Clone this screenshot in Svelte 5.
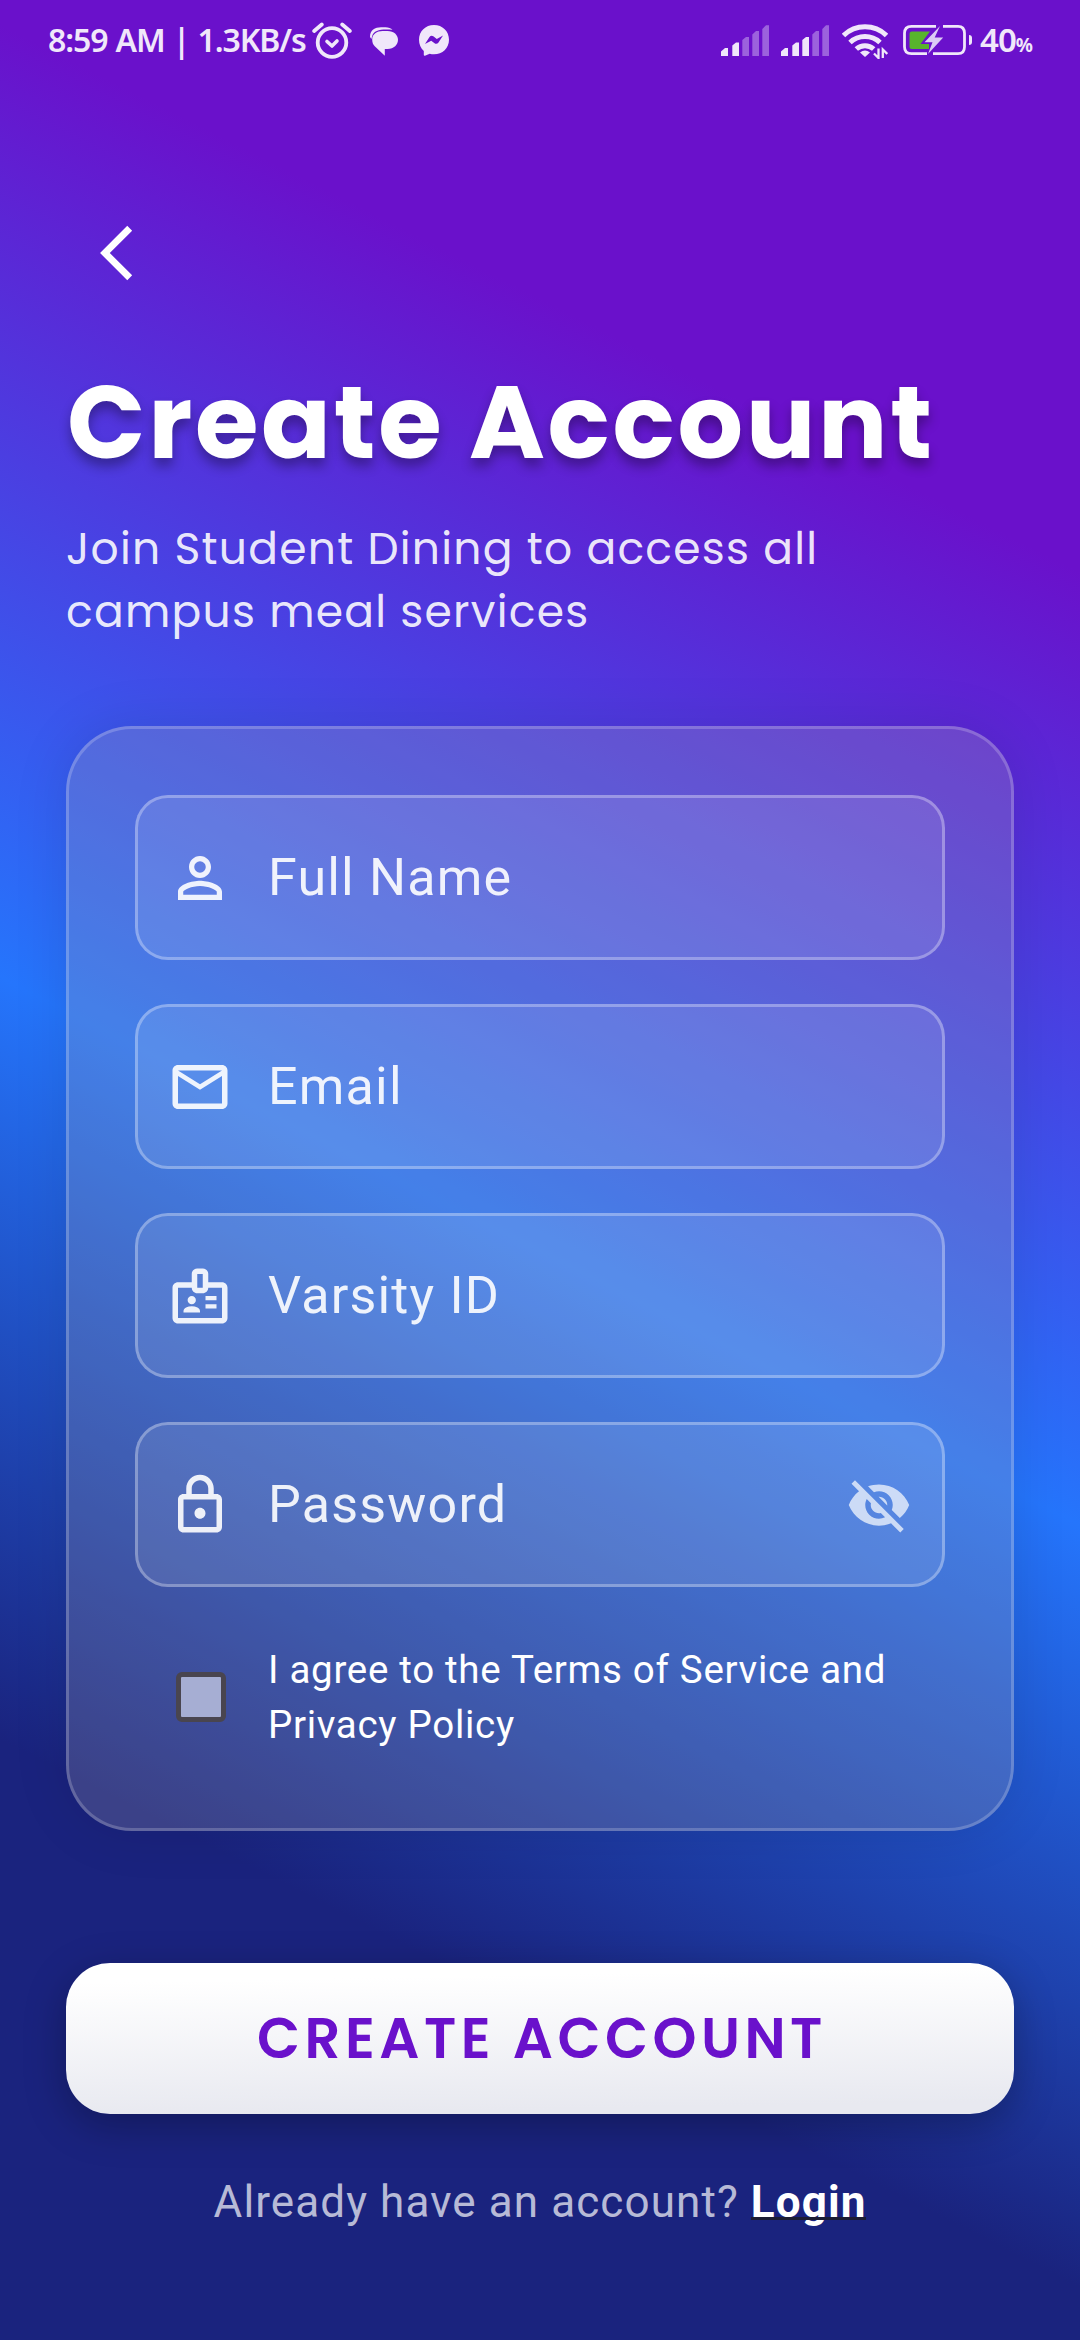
<script>
  const fields = [
    { label: 'Full Name', icon: 'person' },
    { label: 'Email', icon: 'mail' },
    { label: 'Varsity ID', icon: 'badge' },
    { label: 'Password', icon: 'lock', secret: true }
  ];
  const paths = {
    person:
      'M12 5.9a2.1 2.1 0 1 1 0 4.2 2.1 2.1 0 0 1 0-4.2m0 9c2.97 0 6.1 1.46 6.1 2.1v1.1H5.9V17c0-.64 3.13-2.1 6.1-2.1M12 4C9.79 4 8 5.79 8 8s1.79 4 4 4 4-1.79 4-4-1.79-4-4-4zm0 9c-2.67 0-8 1.34-8 4v3h16v-3c0-2.66-5.33-4-8-4z',
    mail:
      'M22 6c0-1.1-.9-2-2-2H4c-1.1 0-2 .9-2 2v12c0 1.1.9 2 2 2h16c1.1 0 2-.9 2-2V6zm-2 0l-8 5-8-5h16zm0 12H4V8l8 5 8-5v10z',
    badge:
      'M20 7h-5V4c0-1.1-.9-2-2-2h-2c-1.1 0-2 .9-2 2v3H4c-1.1 0-2 .9-2 2v11c0 1.1.9 2 2 2h16c1.1 0 2-.9 2-2V9c0-1.1-.9-2-2-2zm-9-3h2v5h-2V4zm9 16H4V9h5c0 1.1.9 2 2 2h2c1.1 0 2-.9 2-2h5v11zM9 12a1.5 1.5 0 1 1 0 3 1.5 1.5 0 0 1 0-3zM11.08 16.18C10.44 15.9 9.74 15.75 9 15.75s-1.44.15-2.08.43c-.56.24-.92.78-.92 1.39V18h6v-.43c0-.61-.36-1.15-.92-1.39zM14 15h4v1.5h-4zM14 12h4v1.5h-4z',
    lock:
      'M18 8h-1V6c0-2.76-2.24-5-5-5S7 3.24 7 6v2H6c-1.1 0-2 .9-2 2v10c0 1.1.9 2 2 2h12c1.1 0 2-.9 2-2V10c0-1.1-.9-2-2-2zM9 6c0-1.66 1.34-3 3-3s3 1.34 3 3v2H9V6zm9 14H6V10h12v10zm-6-3c1.1 0 2-.9 2-2s-.9-2-2-2-2 .9-2 2 .9 2 2 2z'
  };
  const signals = [2, 3];
  const bars = [
    'M0 31v-4.5L4 23h3v8z',
    'M11.3 31V20.500l3.700-3h3v13.500z',
    'M21.300 31V15l3.700-3h3v19z',
    'M31.300 31V9.500l3.700-3.500h3v25z',
    'M41.300 31V4l3.700-3.700h3v30.700z'
  ];
</script>

<main>
  <header class="status">
    <span class="time">8:59 AM | 1.3KB/s</span>
    <svg class="alarm" viewBox="0 0 40 38" width="40" height="38">
      <g fill="none" stroke="currentColor" stroke-linecap="round" stroke-linejoin="round">
        <circle cx="20" cy="21.500" r="14.300" stroke-width="3.800" />
        <path d="M2.200 10l7.600-6.500M37.800 10l-7.600-6.500" stroke-width="3.800" />
        <path d="M15 20.500l5 4.500 5-5" stroke-width="3.600" />
      </g>
    </svg>
    <svg class="chat" viewBox="0 0 28 29" width="28" height="29">
      <path d="M0 10C0 3 5 .3 11 .3h4.500c3 0 5.500 1 7 2.500C12 2 4 2.500 2 9.500L1.500 12z" fill="currentColor" />
      <path d="M2.200 12.500C2.200 7 7 4 12.500 4h5C24 4 28 8 28 12.800S24 22 17.500 22H14.800v6.800L5 19.500C3 17.500 2.200 15.500 2.200 12.500z" fill="currentColor" />
    </svg>
    <svg class="messenger" viewBox="0 0 30 31" width="30" height="31">
      <path fill="currentColor" fill-rule="evenodd" d="M15 0c8.500 0 15 6.200 15 14.700S23.500 29.300 15 29.300c-1.500 0-3-.2-4.300-.6L6 30.700c-.6.200-1.200-.2-1.200-.8V26C1.700 23.300 0 19.300 0 14.700 0 6.200 6.500 0 15 0zM6 19l4.500-7c1-1.400 2.600-1.600 3.800-.7l3.500 2.600 6.200-3.400-4.500 7c-1 1.400-2.600 1.700-3.900.8l-3.400-2.600z" />
    </svg>
    <span class="spacer"></span>
    {#each signals as level}
      <svg class="signal" viewBox="0 0 48 31" width="48" height="31">
        {#each bars as d, i}
          <path {d} fill="currentColor" opacity={i < level ? 1 : 0.38} />
        {/each}
      </svg>
    {/each}
    <svg class="wifi" viewBox="0 0 46 36" width="46" height="36">
      <g fill="none" stroke="currentColor" stroke-width="5">
        <path d="M1.500 12.500a31 31 0 0 1 43 0" />
        <path d="M8 19.500a22 22 0 0 1 30 0" />
        <path d="M14.300 26a13 13 0 0 1 17.400 0" />
      </g>
      <path d="M18 29.500q5-4 10 0L23 34z" fill="currentColor" />
      <path d="M36.500 25.500v9.500l-4.500-4.500M40.800 35v-8.500l4.500 4.500" fill="none" stroke="currentColor" stroke-width="2.300" />
    </svg>
    <svg class="battery" viewBox="0 0 70 32" width="70" height="32">
      <path d="M33 2.300H8.500q-7 0-7 7v13.400q0 7 7 7H24M40 2.300h15q6.500 0 6.500 7v13.400q0 7-6.500 7H30" fill="none" stroke="currentColor" stroke-width="2.800" />
      <path d="M9 7.500h18L17.500 20h8.500v5H9q-2.500 0-2.500-2.500V10Q6.500 7.500 9 7.500z" fill="#58b42c" />
      <path d="M37 2L21.500 18.300h8L25 30l15.200-16.500h-8.500z" fill="#dccbf5" />
      <path d="M66 11q3 0 3 3v4q0 3-3 3z" fill="currentColor" />
    </svg>
    <span class="pct">40<small>%</small></span>
  </header>

  <button class="back" aria-label="Back">
    <svg viewBox="0 0 24 24" width="66" height="66"><path fill="#fff" d="M17.510 3.870L15.730 2.100 5.840 12l9.900 9.900 1.770-1.770L9.380 12l8.130-8.130z" /></svg>
  </button>

  <h1>Create Account</h1>
  <p class="sub"><span>Join Student Dining to access all</span><br /><span>campus meal services</span></p>

  <section class="card">
    {#each fields as f}
      <div class="field">
        <svg viewBox="0 0 24 24" width="66" height="66"><path fill="currentColor" d={paths[f.icon]} /></svg>
        <span class="label">{f.label}</span>
        {#if f.secret}
          <svg class="eye" viewBox="0 0 24 24" width="66" height="66"><path fill="currentColor" d="M12 7c2.760 0 5 2.240 5 5 0 .65-.13 1.260-.36 1.830l2.920 2.920c1.510-1.260 2.700-2.890 3.430-4.750-1.730-4.390-6-7.500-11-7.500-1.400 0-2.740.25-3.980.7l2.160 2.160C10.740 7.130 11.350 7 12 7zM2 4.270l2.280 2.280.46.46C3.080 8.300 1.780 10.020 1 12c1.730 4.390 6 7.500 11 7.500 1.550 0 3.030-.3 4.380-.84l.42.42L19.730 22 21 20.730 3.270 3 2 4.270zM7.530 9.800l1.550 1.550c-.05.21-.08.43-.08.65 0 1.660 1.340 3 3 3 .22 0 .44-.03.65-.08l1.550 1.550c-.67.33-1.410.53-2.200.53-2.760 0-5-2.240-5-5 0-.79.2-1.530.53-2.200zm4.310-.78l3.150 3.150.02-.16c0-1.660-1.340-3-3-3l-.17.01z" /></svg>
        {/if}
      </div>
    {/each}
    <div class="agree">
      <span class="box"></span>
      <span class="terms">I agree to the Terms of Service and<br />Privacy Policy</span>
    </div>
  </section>

  <button class="create">CREATE ACCOUNT</button>
  <p class="foot">Already have an account? <a href="#login">Login</a></p>
</main>

<style>
  :global(body) { margin: 0; }
  main {
    box-sizing: border-box;
    width: 1080px;
    height: 2340px;
    overflow: hidden;
    display: flex;
    flex-direction: column;
    padding: 0 66px;
    font-family: Roboto, sans-serif;
    color: #fff;
    background: linear-gradient(206.9deg, #6a11cb 510px, #2575fc 1360px, #1a237e 2040px);
  }
  .status {
    display: flex;
    align-items: flex-start;
    height: 80px;
    margin: 0 -18px;
    color: #f0e7fa;
    font-family: "Noto Sans", sans-serif;
    flex: none;
  }
  .status svg { flex: none; }
  .time { width: 257px; font-size: 32px; font-weight: 600; line-height: 80px; letter-spacing: -1.1px; word-spacing: 1px; white-space: nowrap; }
  .alarm { margin: 21px 0 0 7px; }
  .chat { margin: 27px 0 0 18px; }
  .messenger { margin: 25px 0 0 21px; }
  .spacer { flex: 1; }
  .signal { margin: 25px 12px 0 0; }
  .wifi { margin: 23px 15px 0 1px; }
  .battery { margin: 24px 7px 0 0; }
  .pct { width: 52px; font-size: 33px; font-weight: 600; line-height: 80px; letter-spacing: -1px; white-space: nowrap; }
  .pct small { font-size: 19px; font-weight: 700; }
  button { border: 0; padding: 0; font: inherit; flex: none; }
  .back { width: 66px; height: 66px; margin: 140px 0 0 18px; background: none; }
  .back svg { display: block; }
  h1 {
    margin: 61px 0 0 1px;
    font: 700 103px/150px Poppins, Inter, sans-serif;
    letter-spacing: 2.7px;
    white-space: nowrap;
    text-shadow: 0 8px 12px rgba(0, 0, 0, 0.32);
    flex: none;
  }
  .sub {
    margin: 20px 0 0;
    font: 400 44px/63px Poppins, Inter, sans-serif;
    letter-spacing: 1.25px;
    color: rgba(255, 255, 255, 0.9);
    white-space: nowrap;
    flex: none;
  }
  .card {
    box-sizing: border-box;
    height: 1105px;
    margin-top: 83px;
    padding: 66px;
    display: flex;
    flex-direction: column;
    gap: 44px;
    flex: none;
    border: 3px solid rgba(255, 255, 255, 0.2);
    border-radius: 66px;
    background: rgba(172, 166, 172, 0.235);
    box-shadow: 0 0 55px rgba(0, 0, 0, 0.1);
  }
  .field {
    box-sizing: border-box;
    height: 165px;
    padding: 0 30px 0 29px;
    display: flex;
    align-items: center;
    flex: none;
    border: 3px solid rgba(255, 255, 255, 0.3);
    border-radius: 33px;
    background: rgba(255, 255, 255, 0.1);
    color: rgba(255, 255, 255, 0.9);
  }
  .label { flex: 1; margin-left: 35px; font-size: 52px; letter-spacing: 1.2px; }
  .eye { color: rgba(255, 255, 255, 0.7); }
  .agree { display: flex; align-items: center; height: 132px; flex: none; }
  .box {
    box-sizing: border-box;
    width: 50px;
    height: 50px;
    margin-left: 41px;
    border: 5.500px solid #49454f;
    border-radius: 6px;
    background: #a6aed3;
  }
  .terms { margin-left: 42px; font-size: 38.500px; line-height: 55px; letter-spacing: 0.700px; white-space: nowrap; }
  .create {
    width: 948px;
    height: 151px;
    margin-top: 132px;
    padding-left: 4px;
    border-radius: 44px;
    background: linear-gradient(179deg, #fff 12%, #e8e9f0 92%);
    box-shadow: 0 11px 41px rgba(0, 0, 0, 0.28);
    color: #6a11cb;
    font: 600 56px/151px Poppins, Inter, sans-serif;
    letter-spacing: 4.5px;
  }
  .foot {
    margin: 57px 0 0;
    text-align: center;
    font-size: 44px;
    line-height: 62px;
    letter-spacing: 1.100px;
    color: rgba(255, 255, 255, 0.7);
    white-space: nowrap;
  }
  .foot a {
    position: relative;
    color: #fff;
    font-weight: 700;
    text-decoration: none;
  }
  /* underline drawn above the descender of the "g" */
  .foot a::after {
    content: "";
    position: absolute;
    left: 0;
    right: 0;
    bottom: 8px;
    height: 3px;
    background: #1c1d33;
  }
</style>
